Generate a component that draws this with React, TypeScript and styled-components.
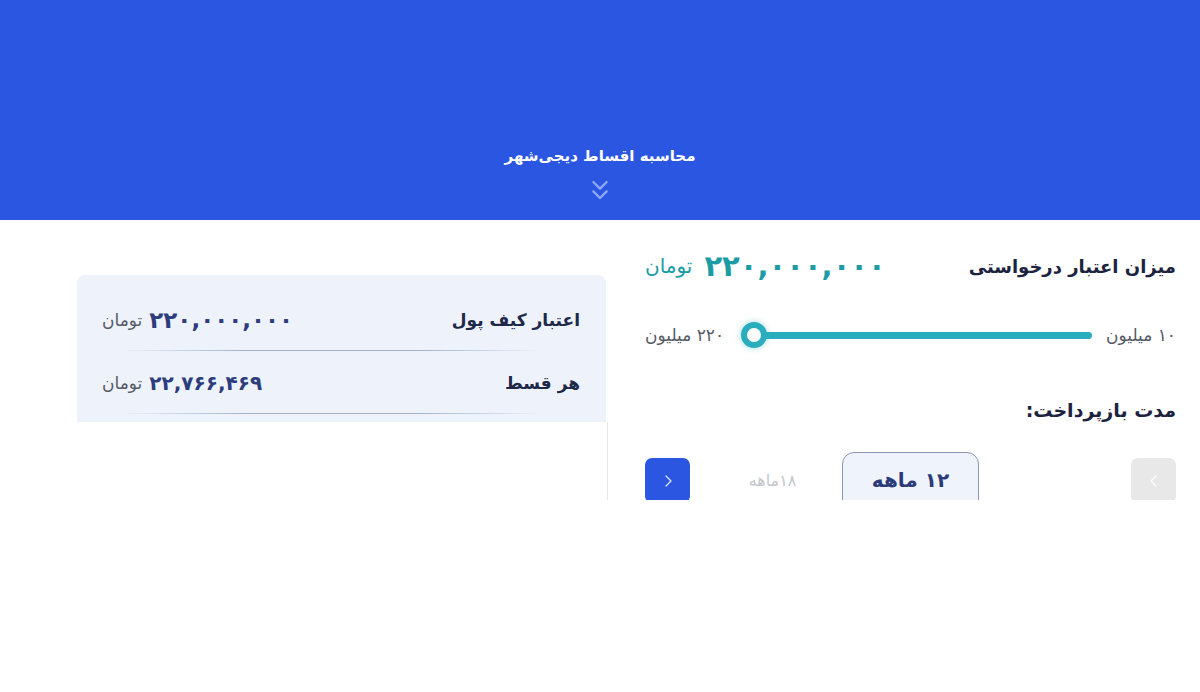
import styled, { createGlobalStyle } from 'styled-components';
import { ChevronsDown } from 'lucide-react';

const GlobalStyle = createGlobalStyle`
  body {
    margin: 0;
    background: #ffffff;
    font-family: 'DejaVu Sans', 'Noto Sans', sans-serif;
  }
`;

const months = [
  { id: 12, label: '۱۲ ماهه', active: true },
  { id: 18, label: '۱۸ماهه', active: false },
];

function Chevron({ side }: { side: 'left' | 'right' }) {
  return (
    <svg width="16" height="16" viewBox="0 0 16 16" fill="none">
      <path
        d={side === 'left' ? 'M10 3 L5 8 L10 13' : 'M6 3 L11 8 L6 13'}
        stroke="currentColor"
        strokeWidth="1.3"
        strokeLinecap="round"
        strokeLinejoin="round"
      />
    </svg>
  );
}

export default function App() {
  return (
    <>
      <GlobalStyle />
      <Header>
        <HeaderTitle>محاسبه اقساط دیجی‌شهر</HeaderTitle>
        <ChevronsDown size={32} strokeWidth={1.7} color="#8eaaf6" />
      </Header>
      <Main dir="rtl">
        <Calculator>
          <TitleRow>
            <Heading $size={18}>میزان اعتبار درخواستی</Heading>
            <Amount>
              <AmountValue>۲۲۰,۰۰۰,۰۰۰</AmountValue>
              <AmountUnit>تومان</AmountUnit>
            </Amount>
          </TitleRow>
          <SliderRow>
            <SliderLabel>۱۰ میلیون</SliderLabel>
            <Track>
              <Thumb />
            </Track>
            <SliderLabel>۲۲۰ میلیون</SliderLabel>
          </SliderRow>
          <Heading $size={19}>مدت بازپرداخت:</Heading>
          <MonthRow>
            <NavButton $disabled>
              <Chevron side="left" />
            </NavButton>
            <MonthTrack>
              {months.map((m) =>
                m.active ? (
                  <MonthCard key={m.id}>{m.label}</MonthCard>
                ) : (
                  <MonthSlot key={m.id}>{m.label}</MonthSlot>
                ),
              )}
            </MonthTrack>
            <NavButton>
              <Chevron side="right" />
            </NavButton>
          </MonthRow>
        </Calculator>
        <Summary>
          <Card>
            <CardRow>
              <CardLabel>اعتبار کیف پول</CardLabel>
              <CardValue>
                <CardNumber $size={23}>۲۲۰,۰۰۰,۰۰۰</CardNumber>
                <CardUnit>تومان</CardUnit>
              </CardValue>
            </CardRow>
            <CardRow>
              <CardLabel>هر قسط</CardLabel>
              <CardValue>
                <CardNumber $size={20}>۲۲,۷۶۶,۴۶۹</CardNumber>
                <CardUnit>تومان</CardUnit>
              </CardValue>
            </CardRow>
          </Card>
          <Rest />
        </Summary>
      </Main>
    </>
  );
}

const Header = styled.header`
  height: 220px;
  background: #2a56e1;
  display: flex;
  flex-direction: column;
  align-items: center;
  justify-content: flex-end;
  gap: 9px;
  padding-bottom: 14px;
  box-sizing: border-box;
`;

const HeaderTitle = styled.h1`
  margin: 0;
  color: #ffffff;
  font-size: 15px;
  font-weight: bold;
`;

const Main = styled.main`
  height: 280px;
  overflow: hidden;
  display: grid;
  grid-template-columns: 531px 531px;
  column-gap: 37px;
  padding: 0 24px 0 77px;
`;

const Calculator = styled.section`
  display: flex;
  flex-direction: column;
  padding-top: 30px;
`;

const TitleRow = styled.div`
  display: flex;
  align-items: center;
  justify-content: space-between;
  height: 32px;
`;

const Heading = styled.h2<{ $size: number }>`
  margin: 0;
  font-size: ${({ $size }) => $size}px;
  font-weight: bold;
  color: #1c2340;
`;

const Amount = styled.div`
  display: flex;
  align-items: center;
  gap: 12px;
  color: #1b9ba3;
`;

const AmountValue = styled.span`
  font-size: 29px;
  font-weight: bold;
  letter-spacing: 0.6px;
`;

const AmountUnit = styled.span`
  font-size: 20px;
`;

const SliderRow = styled.div`
  display: flex;
  align-items: center;
  gap: 14px;
  margin-top: 43px;
  margin-bottom: 54px;
`;

const SliderLabel = styled.span`
  font-size: 17px;
  color: #555a66;
  white-space: nowrap;
`;

const Track = styled.div`
  flex: 1;
  height: 7px;
  border-radius: 4px;
  background: #2aaebd;
  position: relative;
  margin-left: 16px;
`;

const Thumb = styled.span`
  position: absolute;
  left: -13px;
  top: 50%;
  transform: translateY(-50%);
  width: 14px;
  height: 14px;
  border-radius: 50%;
  background: #ffffff;
  border: 6px solid #2aaebd;
  box-shadow: 0 0 6px rgba(42, 174, 189, 0.45);
`;

const MonthRow = styled.div`
  display: flex;
  align-items: flex-start;
  margin-top: 31px;
`;

const NavButton = styled.button<{ $disabled?: boolean }>`
  width: 45px;
  height: 45px;
  margin-top: 6px;
  padding: 0;
  border: none;
  border-radius: 7px;
  display: flex;
  align-items: center;
  justify-content: center;
  flex-shrink: 0;
  background: ${({ $disabled }) => ($disabled ? '#e8e8e8' : '#2a56e1')};
  color: ${({ $disabled }) => ($disabled ? '#ffffff' : '#dfe7ff')};
`;

const MonthTrack = styled.div`
  flex: 1;
  display: flex;
  align-items: flex-start;
  padding-inline-start: 152px;
`;

const MonthSlot = styled.div`
  width: 139px;
  height: 56px;
  display: flex;
  align-items: center;
  justify-content: center;
  font-size: 16px;
  color: #c4c6cc;
  flex-shrink: 0;
`;

const MonthCard = styled.div`
  width: 137px;
  height: 62px;
  box-sizing: border-box;
  border: 1px solid #8c97b2;
  border-radius: 12px;
  background: #eef3fc;
  display: flex;
  align-items: center;
  justify-content: center;
  padding-bottom: 6px;
  font-size: 20px;
  font-weight: bold;
  color: #2b3a78;
  flex-shrink: 0;
`;

const Summary = styled.section`
  display: flex;
  flex-direction: column;
  padding-top: 55px;
`;

const Card = styled.div`
  background: #edf2fb;
  border-radius: 8px 8px 0 0;
  padding: 13px 26px 8px 25px;
  margin-right: 2px;
`;

const CardRow = styled.div`
  display: flex;
  align-items: center;
  justify-content: space-between;
  height: 63px;
  position: relative;

  &::after {
    content: '';
    position: absolute;
    bottom: 0;
    left: 20px;
    right: 40px;
    height: 1px;
    background: linear-gradient(
      90deg,
      rgba(150, 170, 195, 0),
      #9fb2c8 30%,
      #9fb2c8 70%,
      rgba(150, 170, 195, 0)
    );
  }
`;

const CardLabel = styled.span`
  font-size: 17px;
  font-weight: bold;
  color: #1e2849;
`;

const CardValue = styled.div`
  display: flex;
  align-items: center;
  gap: 7px;
`;

const CardNumber = styled.span<{ $size: number }>`
  font-size: ${({ $size }) => $size}px;
  font-weight: bold;
  color: #2d3c7c;
  letter-spacing: 0.5px;
`;

const CardUnit = styled.span`
  font-size: 17px;
  color: #555a66;
`;

const Rest = styled.div`
  flex: 1;
  border-right: 1px solid #e6e7ea;
`;
